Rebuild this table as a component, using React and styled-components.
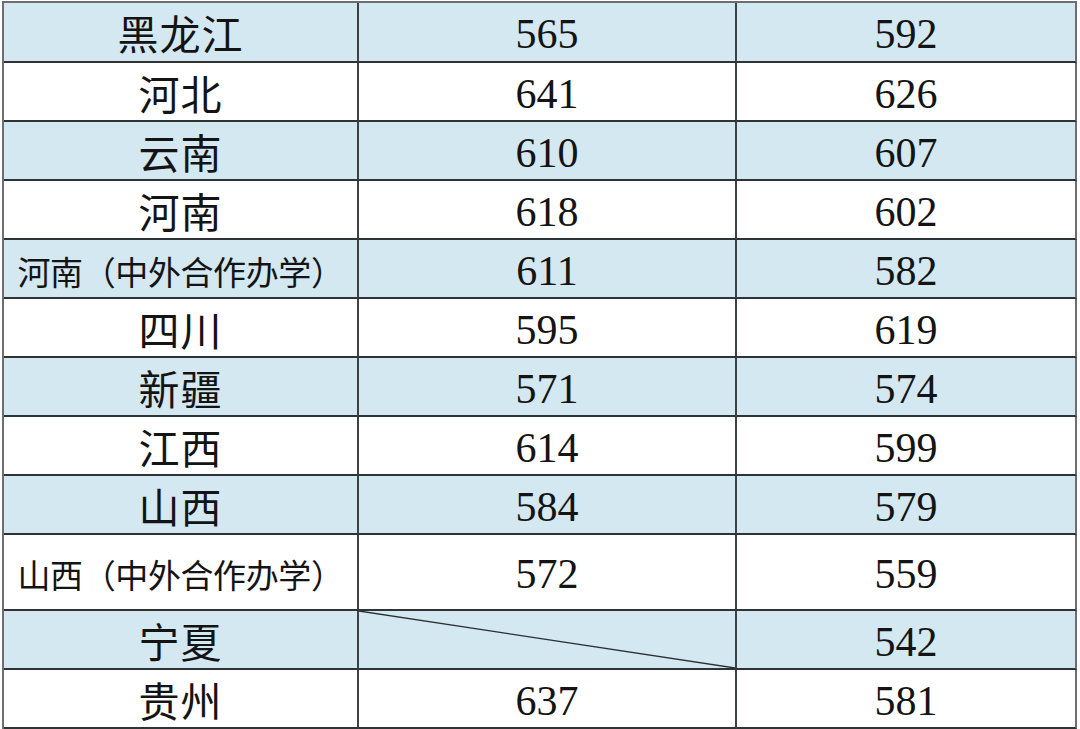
import React from "react";
import styled, { createGlobalStyle } from "styled-components";

const rows = [
  { name: "黑龙江", a: "565", b: "592" },
  { name: "河北", a: "641", b: "626" },
  { name: "云南", a: "610", b: "607" },
  { name: "河南", a: "618", b: "602" },
  { name: "河南（中外合作办学）", a: "611", b: "582", small: true },
  { name: "四川", a: "595", b: "619" },
  { name: "新疆", a: "571", b: "574" },
  { name: "江西", a: "614", b: "599" },
  { name: "山西", a: "584", b: "579" },
  { name: "山西（中外合作办学）", a: "572", b: "559", small: true, tall: true },
  { name: "宁夏", a: null, b: "542" },
  { name: "贵州", a: "637", b: "581" },
];

const App = () => (
  <>
    <GlobalStyle />
    <Page>
      <Table>
        {rows.map((row, i) => (
          <Row key={i} $shaded={i % 2 === 0} $tall={row.tall} $first={i === 0}>
            <NameCell $small={row.small}>{row.name}</NameCell>
            {row.a === null ? (
              <EmptyCell>
                <Diagonal viewBox="0 0 100 100" preserveAspectRatio="none">
                  <line
                    x1="0"
                    y1="0"
                    x2="100"
                    y2="100"
                    stroke="#2a2f33"
                    strokeWidth="1.4"
                    vectorEffect="non-scaling-stroke"
                  />
                </Diagonal>
              </EmptyCell>
            ) : (
              <ScoreCell>{row.a}</ScoreCell>
            )}
            <ScoreCell $last>{row.b}</ScoreCell>
          </Row>
        ))}
      </Table>
    </Page>
  </>
);

const GlobalStyle = createGlobalStyle`
  html, body {
    margin: 0;
    padding: 0;
    background: #ffffff;
  }
`;

const Page = styled.div`
  width: 1080px;
  height: 729px;
  padding: 1px 0 0 2px;
  box-sizing: border-box;
  background: #ffffff;
`;

const Table = styled.div`
  display: flex;
  flex-direction: column;
  width: 1075px;
  border-top: 2px solid #6b6f72;
  border-left: 2px solid #6b6f72;
  box-sizing: border-box;
`;

const Row = styled.div`
  display: grid;
  grid-template-columns: 355px 378px 340px;
  height: ${({ $tall, $first }) => ($tall ? "76px" : $first ? "60px" : "59px")};
  background: ${({ $shaded }) => ($shaded ? "#d3e8f1" : "#ffffff")};
`;

const Cell = styled.div`
  position: relative;
  display: flex;
  align-items: center;
  justify-content: center;
  border-right: 2px solid ${({ $last }) => ($last ? "#6b6f72" : "#3c4144")};
  border-bottom: 2px solid #2e3336;
  box-sizing: border-box;
  color: #141414;
  white-space: nowrap;
  overflow: hidden;
`;

const NameCell = styled(Cell)`
  font-family: "Noto Sans CJK SC", "Noto Sans", sans-serif;
  font-size: ${({ $small }) => ($small ? "33px" : "41px")};
  font-weight: 400;
  padding-top: ${({ $small }) => ($small ? "4px" : "0px")};
  letter-spacing: ${({ $small }) => ($small ? "-0.4px" : "1px")};
`;

const ScoreCell = styled(Cell)`
  font-family: "Liberation Serif", "Times New Roman", serif;
  font-size: 42px;
  font-weight: 400;
  padding-top: 4px;
`;

const EmptyCell = styled(Cell)``;

const Diagonal = styled.svg`
  position: absolute;
  inset: 0;
  width: 100%;
  height: 100%;
`;

export default App;
